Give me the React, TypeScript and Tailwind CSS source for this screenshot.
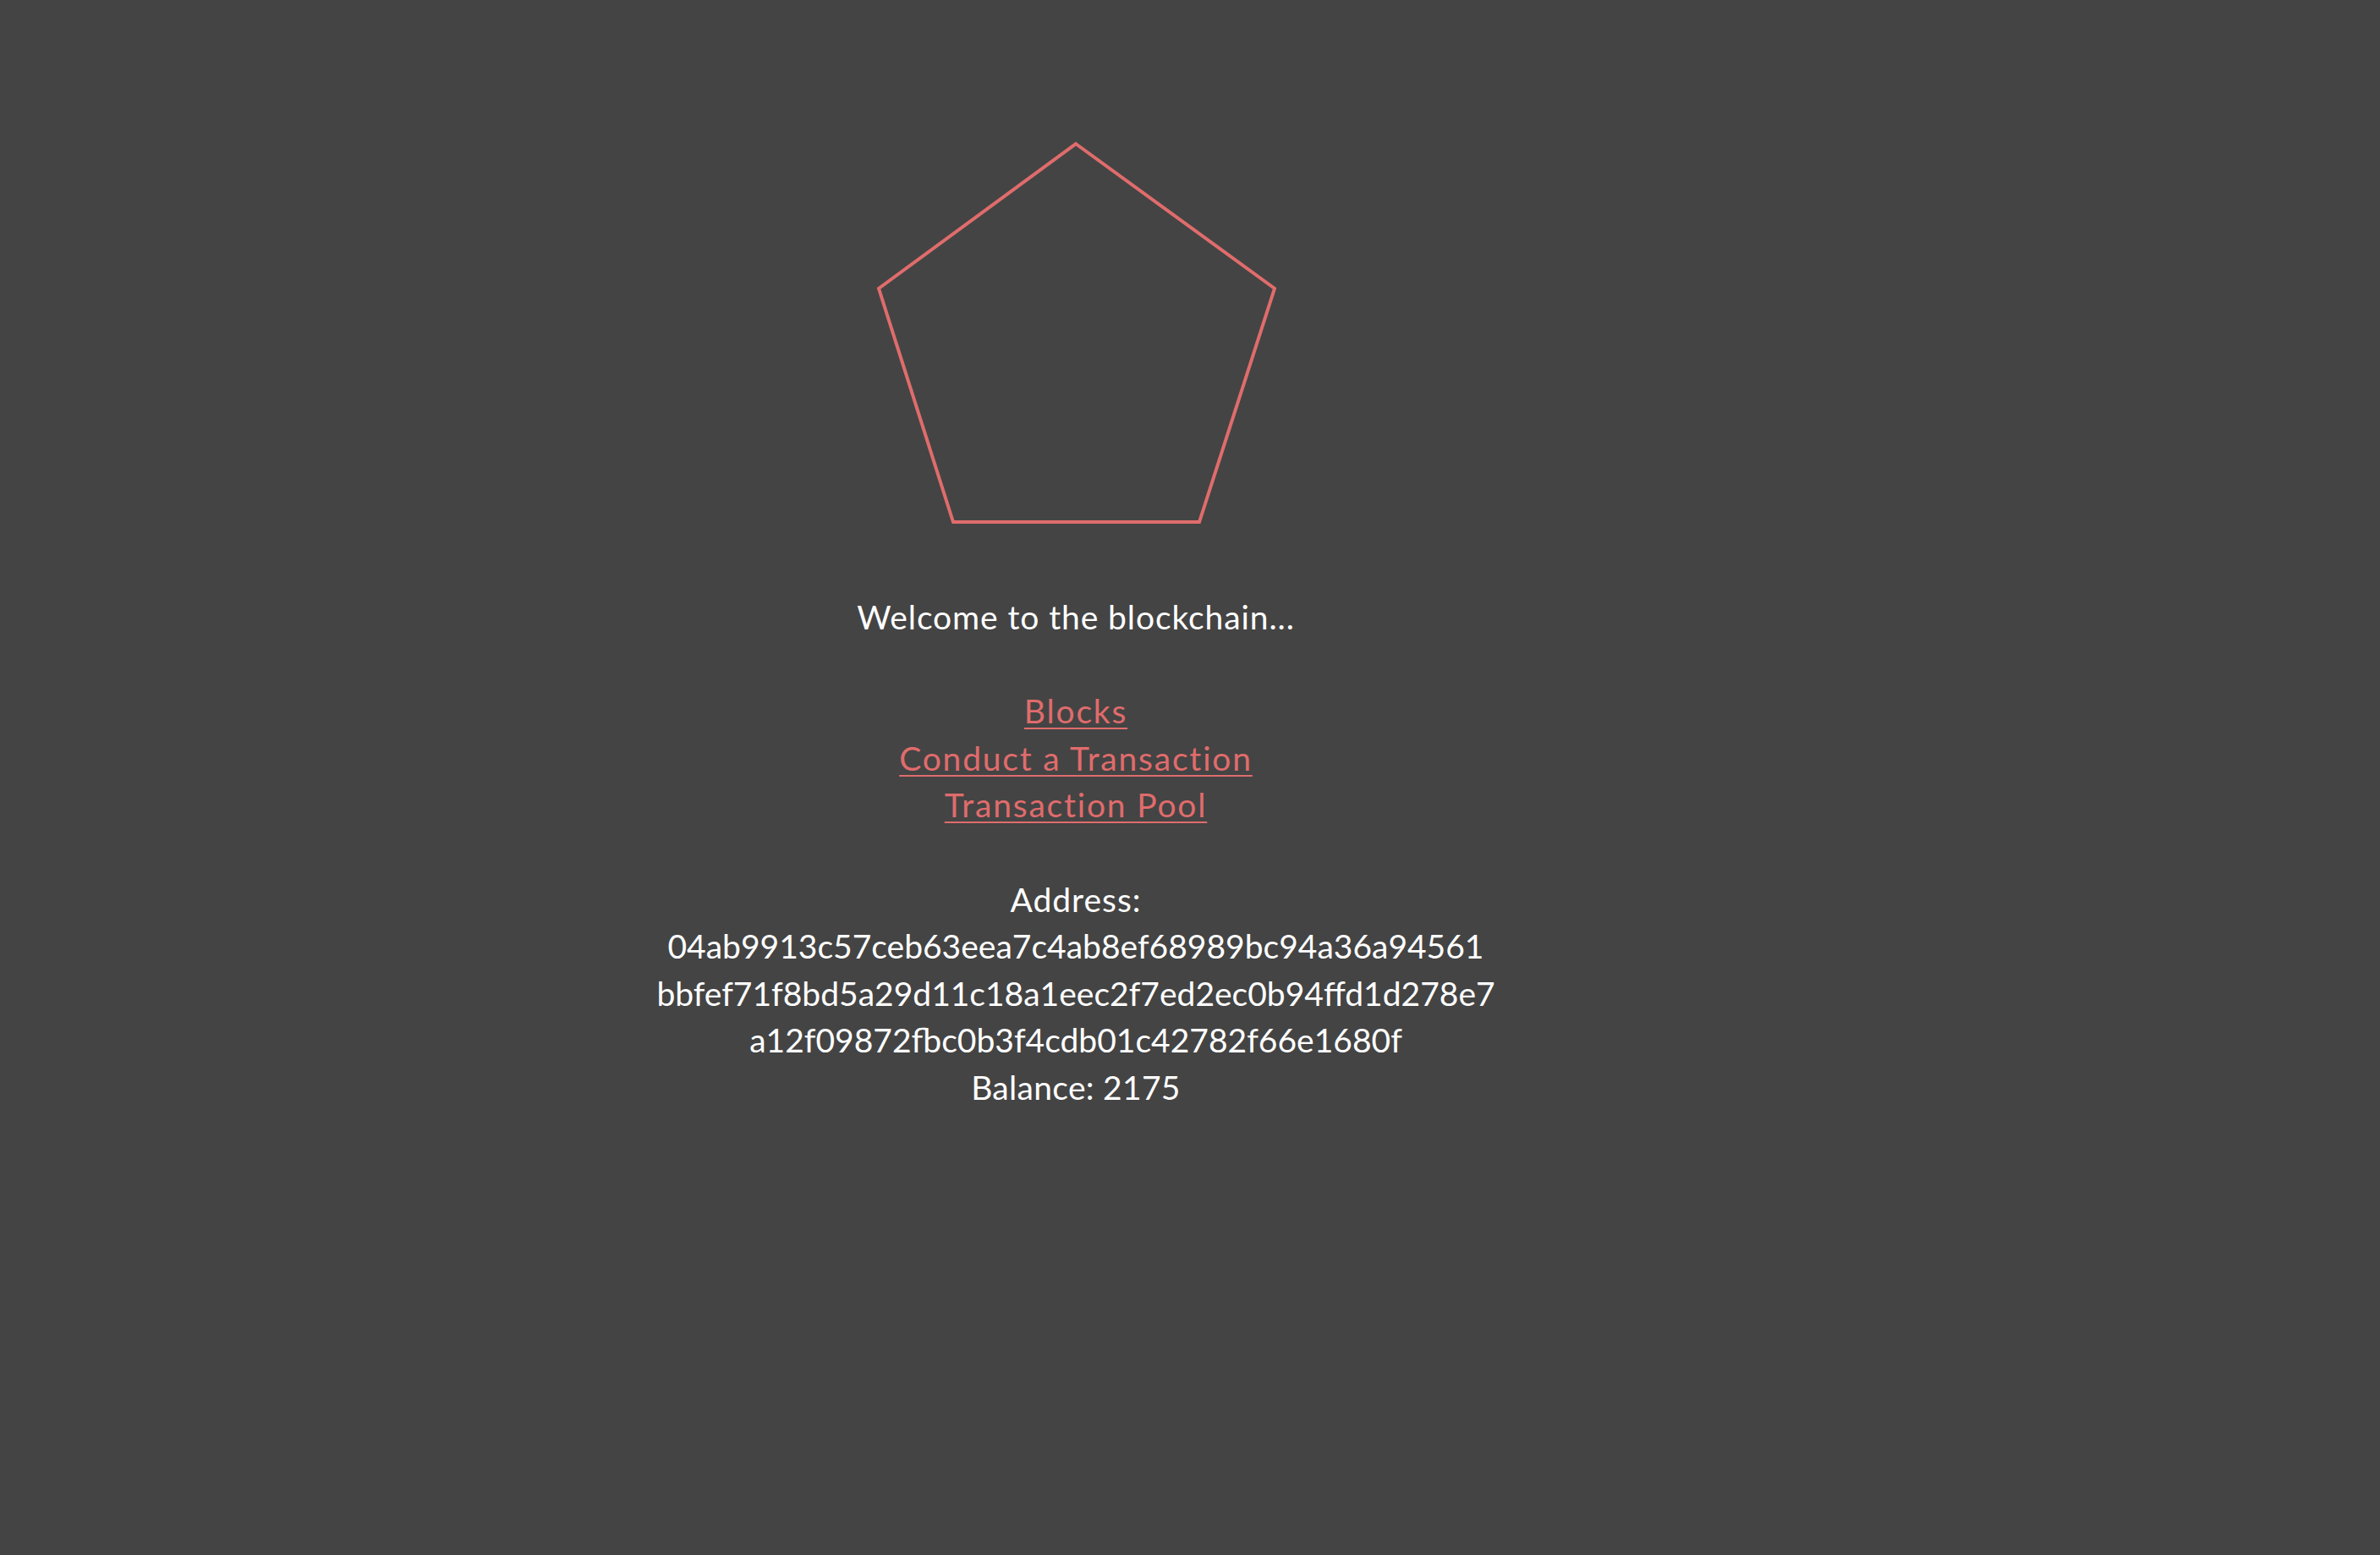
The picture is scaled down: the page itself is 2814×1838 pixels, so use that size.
const hexLines = [
  '04ab9913c57ceb63eea7c4ab8ef68989bc94a36a94561',
  'bbfef71f8bd5a29d11c18a1eec2f7ed2ec0b94ffd1d278e7',
  'a12f09872fbc0b3f4cdb01c42782f66e1680f',
];

const links = ['Blocks', 'Conduct a Transaction', 'Transaction Pool'];

const Pentagon = () => (
  <svg width="480" height="464" viewBox="0 0 480 464" className="mt-[160px]">
    <polygon
      points="240,10 475,181 386,457 95,457 7,181"
      fill="none"
      stroke="#e06c6c"
      strokeWidth="4"
    />
  </svg>
);

const App = () => {
  return (
    <div className="min-h-screen w-full bg-[#444444] font-['Lato',sans-serif] text-[39px] leading-[55.6px] text-white">
      <div className="flex w-[2544px] flex-col items-center text-center">
        <Pentagon />
        <div className="mt-[78px] tracking-[0.9px]">Welcome to the blockchain...</div>
        <div className="mt-[55.6px] flex flex-col items-center tracking-[1.8px]">
          {links.map((link) => (
            <a
              key={link}
              href="#"
              className="text-[#e06c6c] underline decoration-2 underline-offset-[5px]"
            >
              {link}
            </a>
          ))}
        </div>
        <div className="mt-[55.6px] flex flex-col items-center">
          <div className="tracking-[1px]">Address:</div>
          {hexLines.map((line) => (
            <div key={line}>{line}</div>
          ))}
          <div className="tracking-[0.3px]">Balance: 2175</div>
        </div>
      </div>
    </div>
  );
};

export default App;
